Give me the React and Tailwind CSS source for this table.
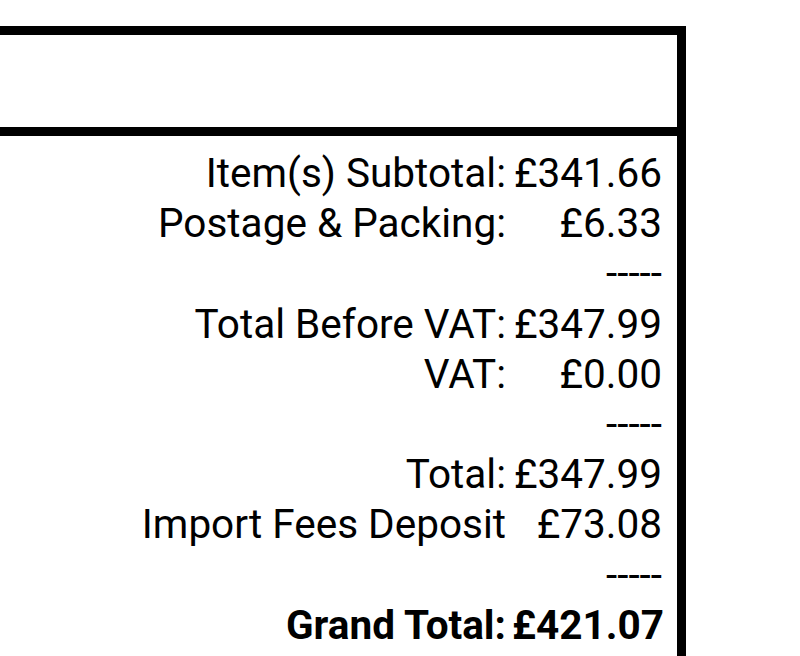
export default function App() {
  const rows = [
    { label: "Item(s) Subtotal:", value: "£341.66" },
    { label: "Postage & Packing:", value: "£6.33" },
    { label: "", value: "-----" },
    { label: "Total Before VAT:", value: "£347.99" },
    { label: "VAT:", value: "£0.00" },
    { label: "", value: "-----" },
    { label: "Total:", value: "£347.99" },
    { label: "Import Fees Deposit", value: "£73.08" },
    { label: "", value: "-----" },
    { label: "Grand Total:", value: "£421.07", bold: true },
  ];

  return (
    <div className="h-[656px] bg-white overflow-hidden">
      <div className="w-[686px] min-h-[700px] mt-[26px] border-t-[9px] border-r-[9px] border-black">
        <div className="h-[101px] border-b-[9px] border-black" />
        <div className="pt-[12px] pr-[15px] font-['Roboto',sans-serif] text-[40.5px] leading-[50.2px] text-black">
          {rows.map((r, i) => (
            <div key={i} className={"flex " + (r.bold ? "font-bold" : "")}>
              <div className="flex-1 text-right whitespace-nowrap">{r.label}</div>
              <div className="w-[150px] ml-[6px] text-right whitespace-nowrap">{r.value}</div>
            </div>
          ))}
        </div>
      </div>
    </div>
  );
}
